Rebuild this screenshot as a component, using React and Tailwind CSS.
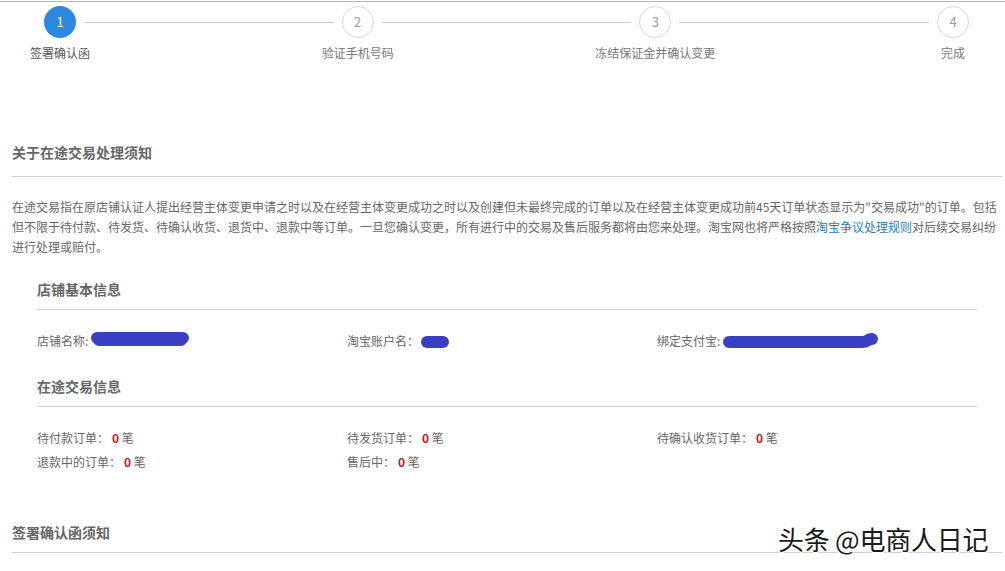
const font = "font-['Microsoft_YaHei','Noto_Sans_CJK_SC',sans-serif]";

function Step({ n, label, active }) {
  return (
    <div className="flex flex-col items-center w-8 shrink-0">
      <div className={active
        ? "w-8 h-8 rounded-full bg-[#2f88e0] text-white flex items-center justify-center text-[13px]"
        : "w-8 h-8 rounded-full border border-[#d8d8d8] bg-white text-[#999999] flex items-center justify-center text-[13px]"}>
        {n}
      </div>
      <div className={active
        ? "mt-[6px] whitespace-nowrap text-xs leading-[18px] text-[#555555]"
        : "mt-[6px] whitespace-nowrap text-xs leading-[18px] text-[#777777]"}>
        {label}
      </div>
    </div>
  );
}

const Line = () => <div className="flex-1 h-px bg-[#c9c9c9] mx-2 mt-4 self-start" />;

const Heading = ({ children, className }) => (
  <div className={"border-b border-[#cfcfcf] text-sm font-bold leading-5 text-[#666666] " + className}>{children}</div>
);

const Scribble = ({ w, h = 16, d, className = "" }) => (
  <svg width={w} height={h} viewBox={`0 0 ${w} ${h}`} className={"inline-block shrink-0 " + className}>
    <path d={d} fill="none" stroke="#3a40c4" strokeWidth="12" strokeLinecap="round" strokeLinejoin="round" />
  </svg>
);

const Count = ({ label, n = 0 }) => (
  <div>{label}：<span className="ml-[3px] font-bold text-[#c8161d]">{n}</span> 笔</div>
);

export default function App() {
  return (
    <div className={"relative w-[1005px] h-[571px] overflow-hidden bg-white pt-[1px] text-xs text-[#666666] " + font}>
      <div className="h-[1px] bg-[#b5b5b5]" />
      <div className="flex items-start pl-[44px] pr-[36px] pt-[4px]">
        <Step n="1" label="签署确认函" active />
        <Line />
        <Step n="2" label="验证手机号码" />
        <Line />
        <Step n="3" label="冻结保证金并确认变更" />
        <Line />
        <Step n="4" label="完成" />
      </div>

      <div className="pl-[12px] pr-[3px] mt-[80px]">
        <Heading className="pb-[14px]">关于在途交易处理须知</Heading>
      </div>

      <p className="pl-[12px] pr-[8px] mt-[20px] leading-5 text-[#666666]">
        在途交易指在原店铺认证人提出经营主体变更申请之时以及在经营主体变更成功之时以及创建但未最终完成的订单以及在经营主体变更成功前45天订单状态显示为"交易成功"的订单。包括但不限于待付款、待发货、待确认收货、退货中、退款中等订单。一旦您确认变更，所有进行中的交易及售后服务都将由您来处理。淘宝网也将严格按照<span className="text-[#2a7ab8]">淘宝争议处理规则</span>对后续交易纠纷进行处理或赔付。
      </p>

      <div className="pl-[37px] pr-[28px] mt-[22px]">
        <Heading className="pb-[10px]">店铺基本信息</Heading>
        <div className="grid grid-cols-[310px_310px_1fr] mt-[21px] leading-5">
          <div className="flex items-center">
            店铺名称:
            <Scribble w={98} d="M6 6 H92 M8 8 H90" className="ml-[3px] -mt-[3px]" />
          </div>
          <div className="flex items-center">
            淘宝账户名：
            <Scribble w={28} d="M6 8 H22" className="ml-[2px] mt-[1px]" />
          </div>
          <div className="flex items-center">
            绑定支付宝:
            <Scribble w={155} d="M6 9 H139 C145 9 144 6 149 6" className="ml-[3px]" />
          </div>
        </div>
        <Heading className="pb-[10px] mt-[25px]">在途交易信息</Heading>
        <div className="grid grid-cols-[310px_310px_1fr] gap-y-1 mt-[21px] leading-5">
          <Count label="待付款订单" />
          <Count label="待发货订单" />
          <Count label="待确认收货订单" />
          <Count label="退款中的订单" />
          <Count label="售后中" />
        </div>
      </div>

      <div className="pl-[12px] pr-[3px] mt-[50px]">
        <Heading className="pb-[10px]">签署确认函须知</Heading>
      </div>

      <div className="absolute left-[778px] top-[522px] text-[26px] tracking-[-0.25px] leading-[34px] whitespace-nowrap text-[#1a1a1a] [text-shadow:1px_1px_0_#ffffff,-1px_-1px_0_#ffffff,1px_-1px_0_#ffffff,-1px_1px_0_#ffffff]">
        头条 @电商人日记
      </div>
    </div>
  );
}
